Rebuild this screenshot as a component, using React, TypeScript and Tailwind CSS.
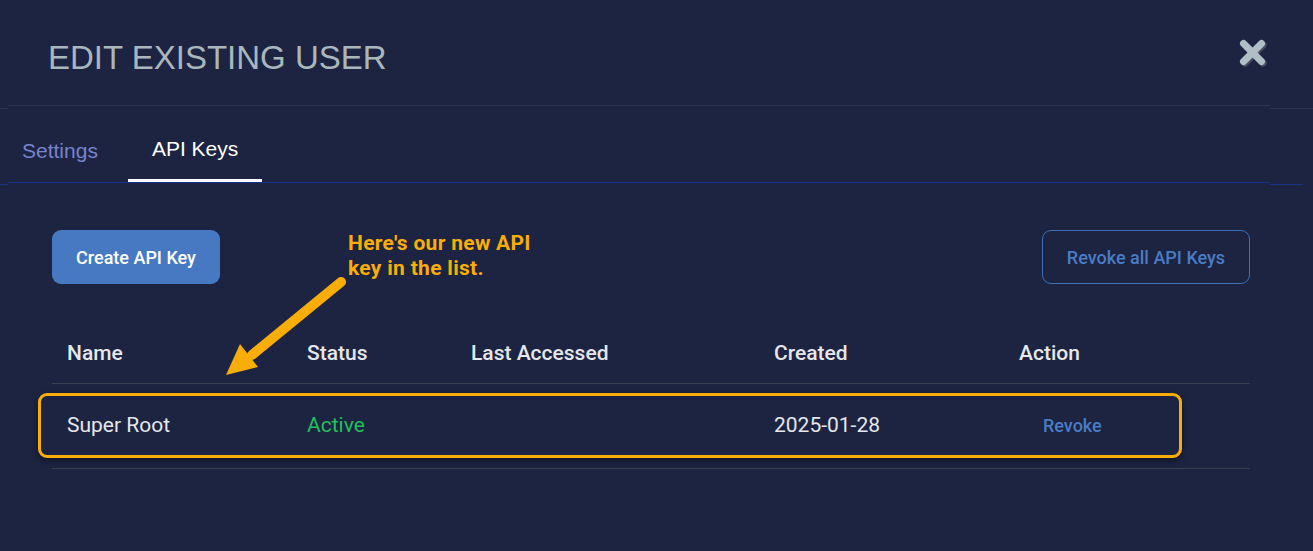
import React from "react";

const CloseIcon = () => (
  <svg width="32" height="32" viewBox="0 0 32 32">
    <g stroke="#4b5068" strokeWidth="7" strokeLinecap="round">
      <line x1="7" y1="7" x2="25" y2="25" />
      <line x1="25" y1="7" x2="7" y2="25" />
    </g>
    <g stroke="#b0bec5" strokeWidth="7" strokeLinecap="round">
      <line x1="5.5" y1="5.5" x2="23.5" y2="23.5" />
      <line x1="23.5" y1="5.5" x2="5.5" y2="23.5" />
    </g>
  </svg>
);

export default function App() {
  return (
    <div className="relative w-[1313px] h-[551px] overflow-hidden bg-[#1c2442] font-['Roboto',sans-serif]">
      {/* Header */}
      <div className="flex h-[105px] items-center justify-between pl-[48px] pr-[43px]">
        <h1 className="font-['Liberation_Sans',Arial,sans-serif] text-[33px] leading-none text-[#a9b7bd] pt-[9px]">
          EDIT EXISTING USER
        </h1>
        <div className="mt-[2px]">
          <CloseIcon />
        </div>
      </div>
      <div className="flex h-[4px]">
        <div className="w-[8px] border-b border-[#2d3552] h-[4px]" />
        <div className="w-[1262px] border-t border-[#2d3552]" />
        <div className="flex-1 border-b border-[#2d3552] h-[4px]" />
      </div>

      {/* Tabs */}
      <div className="flex h-[73px] items-end pl-[8px] font-['Liberation_Sans',Arial,sans-serif] text-[21px]">
        <div className="flex h-full items-center px-[14px] text-[#7883cc] pt-[10px]">Settings</div>
        <div className="ml-[16px] flex h-full flex-col items-center">
          <div className="flex flex-1 items-center px-[24px] text-white pt-[10px]">API Keys</div>
          <div className="h-[3px] w-full bg-white" />
        </div>
      </div>
      <div className="flex h-[3px]">
        <div className="w-[8px] h-[3px] border-b border-[#16318a]" />
        <div className="w-[1262px] border-t border-[#16318a]" />
        <div className="w-[33px] h-[3px] border-b border-[#16318a]" />
      </div>

      {/* Content */}
      <div className="pl-[52px] pr-[63px] pt-[45px]">
        <div className="flex items-center justify-between">
          <button className="h-[54px] w-[168px] rounded-[9px] bg-[#4679c2] text-[18px] font-medium text-white">
            Create API Key
          </button>
          <button className="h-[54px] w-[208px] rounded-[9px] border-[1.5px] border-[#3d6fb8] text-[18px] font-medium text-[#4a7cc4]">
            Revoke all API Keys
          </button>
        </div>

        <div className="mt-[39px]">
          <div className="grid h-[61px] grid-cols-[240px_164px_303px_245px_1fr] items-center border-b border-[#3a3f4f] pl-[15px] pt-[2px] text-[21px] font-medium text-[#e5e7eb]">
            <div>Name</div>
            <div>Status</div>
            <div>Last Accessed</div>
            <div>Created</div>
            <div>Action</div>
          </div>
          <div className="grid h-[85px] grid-cols-[240px_164px_303px_245px_1fr] items-center border-b border-[#3a3f4f] pl-[15px] text-[21px] text-[#e5e7eb]">
            <div>Super Root</div>
            <div className="text-[#22bf5d]">Active</div>
            <div></div>
            <div>2025-01-28</div>
            <div className="pl-[24px] pb-[1px] text-[18px] font-medium text-[#4a7cc4]">Revoke</div>
          </div>
        </div>
      </div>

      {/* Highlight box overlay */}
      <div className="absolute left-[38px] top-[393px] h-[65px] w-[1144px] rounded-[9px] border-[3px] border-[#f9ad08] shadow-[0_3px_6px_rgba(0,0,0,0.45)]" />

      {/* Annotation */}
      <div className="absolute left-[348px] top-[231px] w-[200px] text-[21px] font-bold leading-[25px] tracking-[0.3px] text-[#f9ad08]">
        Here's our new API key in the list.
      </div>
      <svg className="absolute left-0 top-0" width="1313" height="551" viewBox="0 0 1313 551">
        <line x1="341" y1="282" x2="252" y2="355" stroke="#f9ad08" strokeWidth="10" strokeLinecap="round" />
        <polygon points="226,375 240,344 258,367" fill="#f9ad08" />
      </svg>
    </div>
  );
}
